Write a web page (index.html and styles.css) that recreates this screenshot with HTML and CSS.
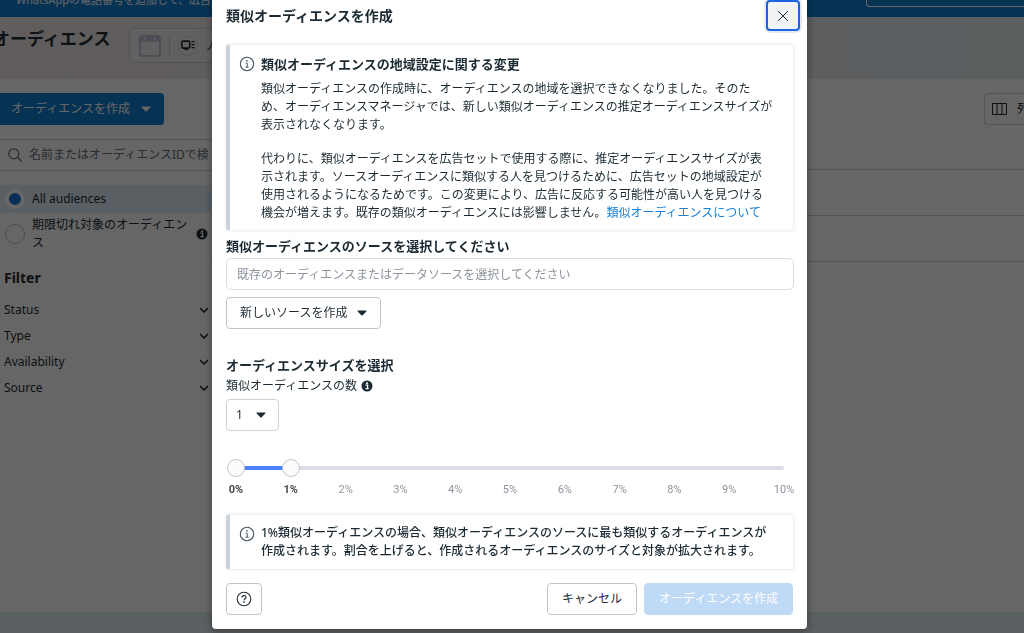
FILE: index.html
```html
<!DOCTYPE html>
<html lang="ja">
<head>
    <meta charset="UTF-8">
    <meta name="viewport" content="width=device-width, initial-scale=1.0">
    <title>類似オーディエンスを作成</title>
    <link rel="stylesheet" href="styles.css">
</head>
<body>
    <!-- Shared icons -->
    <svg class="icon-defs" width="0" height="0" aria-hidden="true">
        <symbol id="caret" viewBox="0 0 10 6"><path d="M1.2 0.5h7.6c.6 0 .9.6.5 1L5.7 5.3c-.4.4-1 .4-1.4 0L.7 1.5c-.4-.4-.1-1 .5-1z" fill="currentColor"/></symbol>
        <symbol id="chevron" viewBox="0 0 10 6"><path d="M1 1l4 4 4-4" fill="none" stroke="currentColor" stroke-width="1.6"/></symbol>
        <symbol id="info-solid" viewBox="0 0 12 12"><circle cx="6" cy="6" r="5.5" fill="currentColor"/><circle cx="6" cy="3.3" r="1" fill="var(--hole)"/><path d="M4.6 5.2h2v3.3h.9M4.5 8.6h3.2" fill="none" stroke="var(--hole)" stroke-width="1.2"/></symbol>
        <symbol id="info-line" viewBox="0 0 16 16"><circle cx="8" cy="8" r="6.7" fill="none" stroke="currentColor" stroke-width="1.1"/><circle cx="8" cy="4.9" r=".8" fill="currentColor"/><path d="M6.8 7.2h1.4v3.9M6.6 11.2h3" fill="none" stroke="currentColor"/></symbol>
    </svg>

    <div class="page">
        <div class="banner">
            <span class="banner-text">WhatsAppの電話番号を追加して、広告や</span>
            <button class="banner-btn" aria-label="追加"></button>
        </div>

        <header class="page-header">
            <h1>オーディエンス</h1>
            <button class="account-switch">
                <svg width="22" height="22" viewBox="0 0 22 22" fill="none" stroke="#bcc3d4" stroke-width="2"><rect x="1" y="1" width="20" height="20" rx="3"/><path d="M1 4h20" stroke-width="5"/><path d="M5 3.5h1.5M15 3.5h1.5" stroke="#fff"/></svg>
                <span class="divider"></span>
                <span class="account-icon">
                    <svg width="14" height="11" viewBox="0 0 16 12" fill="none" stroke="currentColor"><rect x="1" y="1" width="9" height="8" rx="1.5" stroke-width="1.8"/><path d="M4 10.5h4M12 1.5h3.5M12 5h3.5M12 8.5h3.5" stroke-width="1.4"/></svg>
                </span>
                <span>人</span>
            </button>
        </header>

        <div class="workspace">
            <aside class="sidebar">
                <button class="create-btn">オーディエンスを作成 <svg width="10" height="6"><use href="#caret"/></svg></button>
                <label class="search">
                    <svg width="14" height="14" viewBox="0 0 14 14" fill="none" stroke="currentColor" stroke-width="1.2"><circle cx="5.8" cy="5.8" r="5"/><path d="M9.5 9.5l4 4"/></svg>
                    <input type="text" placeholder="名前またはオーディエンスIDで検索" aria-label="検索">
                </label>
                <div class="audience-options">
                    <label class="option active"><input type="radio" name="audience" checked><span>All audiences</span></label>
                    <label class="option"><input type="radio" name="audience"><span>期限切れ対象のオーディエンス</span><svg width="12" height="12"><use href="#info-solid"/></svg></label>
                </div>
                <h2>Filter</h2>
                <button class="filter-row">Status <svg width="10" height="6"><use href="#chevron"/></svg></button>
                <button class="filter-row">Type <svg width="10" height="6"><use href="#chevron"/></svg></button>
                <button class="filter-row">Availability <svg width="10" height="6"><use href="#chevron"/></svg></button>
                <button class="filter-row">Source <svg width="10" height="6"><use href="#chevron"/></svg></button>
            </aside>
            <main class="content">
                <div class="toolbar">
                    <button class="columns-btn"><svg width="15" height="12" viewBox="0 0 15 12" fill="none" stroke="currentColor"><path d="M.5.5h14v11H.5zM5 .5v11M10 .5v11"/></svg>列</button>
                </div>
                <div class="row"></div>
                <div class="row"></div>
                <div class="row"></div>
            </main>
        </div>
        <footer class="page-footer"></footer>
    </div>

    <div class="overlay">
        <section class="modal" role="dialog" aria-labelledby="modal-title">
            <div class="modal-header">
                <h2 id="modal-title">類似オーディエンスを作成</h2>
                <button class="close-btn" aria-label="閉じる">
                    <svg width="12" height="12" viewBox="0 0 12 12" stroke="currentColor"><path d="M1 1l10 10M11 1L1 11"/></svg>
                </button>
            </div>

            <div class="modal-body">
                <div class="notice">
                    <svg class="notice-icon" width="16" height="16"><use href="#info-line"/></svg>
                    <div>
                        <h3>類似オーディエンスの地域設定に関する変更</h3>
                        <p>類似オーディエンスの作成時に、オーディエンスの地域を選択できなくなりました。そのた<br>め、オーディエンスマネージャでは、新しい類似オーディエンスの推定オーディエンスサイズが<br>表示されなくなります。</p>
                        <p>代わりに、類似オーディエンスを広告セットで使用する際に、推定オーディエンスサイズが表<br>示されます。ソースオーディエンスに類似する人を見つけるために、広告セットの地域設定が<br>使用されるようになるためです。この変更により、広告に反応する可能性が高い人を見つける<br>機会が増えます。既存の類似オーディエンスには影響しません。<a href="#">類似オーディエンスについて</a></p>
                    </div>
                </div>

                <label class="section-title" for="source">類似オーディエンスのソースを選択してください</label>
                <input class="source-input" id="source" type="text" placeholder="既存のオーディエンスまたはデータソースを選択してください">
                <button class="btn source-btn">新しいソースを作成 <svg width="10" height="6"><use href="#caret"/></svg></button>

                <h3 class="section-title size-title">オーディエンスサイズを選択</h3>
                <label class="count-label" for="count">類似オーディエンスの数 <svg width="12" height="12"><use href="#info-solid"/></svg></label>
                <div class="select-wrap">
                    <select id="count">
                        <option>1</option>
                        <option>2</option>
                        <option>3</option>
                    </select>
                    <svg width="10" height="6"><use href="#caret"/></svg>
                </div>

                <div class="slider">
                    <div class="track"><div class="fill" style="width: 10%"></div></div>
                    <input type="range" min="0" max="10" value="0" aria-label="最小">
                    <input type="range" min="0" max="10" value="1" aria-label="最大">
                </div>
                <div class="ticks">
                    <span class="on">0%</span><span class="on">1%</span><span>2%</span><span>3%</span><span>4%</span><span>5%</span><span>6%</span><span>7%</span><span>8%</span><span>9%</span><span>10%</span>
                </div>

                <div class="notice notice-size">
                    <svg class="notice-icon" width="16" height="16"><use href="#info-line"/></svg>
                    <p>1%類似オーディエンスの場合、類似オーディエンスのソースに最も類似するオーディエンスが<br>作成されます。割合を上げると、作成されるオーディエンスのサイズと対象が拡大されます。</p>
                </div>
            </div>

            <div class="modal-footer">
                <button class="btn help-btn" aria-label="ヘルプ">
                    <svg width="16" height="16" viewBox="0 0 16 16" fill="none" stroke="currentColor" stroke-width="1.1"><circle cx="8" cy="8" r="6.8"/><path d="M6 6.6c0-1.2.8-2 2-2s2 .8 2 1.8c0 1.3-2 1.5-2 2.9"/><circle cx="8" cy="11.2" r=".3"/></svg>
                </button>
                <button class="btn cancel-btn">キャンセル</button>
                <button class="btn submit-btn" disabled>オーディエンスを作成</button>
            </div>
        </section>
    </div>
</body>
</html>
```
FILE: styles.css
```css
:root {
    --text: #1c2b33;
    --muted: #8d949e;
    --blue: #1080d2;
    --border: #cbd2d9;
    --hole: #fff;
}

* {
    margin: 0;
    padding: 0;
    box-sizing: border-box;
}

body {
    font-family: "Noto Sans", "Noto Sans CJK JP", sans-serif;
    font-size: 12px;
    line-height: 18px;
    color: var(--text);
    overflow: hidden;
}

button, input, select {
    font: inherit;
    color: inherit;
}

button {
    border: none;
    background: none;
    cursor: pointer;
    white-space: nowrap;
}

svg {
    flex-shrink: 0;
}

.icon-defs {
    position: absolute;
}

/* Page behind the dialog */
.page {
    min-height: 100vh;
    display: flex;
    flex-direction: column;
    background: #fff;
}

.banner {
    display: flex;
    justify-content: space-between;
    align-items: flex-start;
    height: 17px;
    overflow: hidden;
    padding-left: 16px;
    background: var(--blue);
    color: #fff;
    font-size: 11px;
}

.banner-text {
    margin-top: -9px;
}

.banner-btn {
    width: 158px;
    height: 7px;
    border: 1px solid #fff;
    border-top: none;
    border-right: none;
    border-radius: 0 0 0 4px;
}

.page-header {
    display: flex;
    align-items: flex-start;
    gap: 19px;
    height: 62px;
    padding-top: 11px;
    background: linear-gradient(90deg, #f2e8e7, #e6e6ee 60%, #e4eef1);
}

.page-header h1 {
    margin-left: -7px;
    font-size: 17px;
    line-height: 22px;
}

.account-switch {
    display: flex;
    align-items: center;
    gap: 8px;
    width: 170px;
    height: 35px;
    padding-left: 9px;
    border: 1px solid var(--border);
    border-radius: 4px;
    background: rgba(255, 255, 255, 0.3);
}

.divider {
    width: 1px;
    height: 20px;
    background: var(--border);
}

.account-icon {
    display: flex;
    align-items: center;
    justify-content: center;
    width: 20px;
    height: 20px;
    border: 1px solid #dadde3;
    border-radius: 50%;
}

.workspace {
    display: flex;
    flex: 1;
    padding-top: 14px;
}

.sidebar {
    width: 211px;
}

.create-btn {
    display: flex;
    align-items: center;
    gap: 11px;
    height: 32px;
    padding: 0 13px 0 11px;
    border-radius: 0 4px 4px 0;
    background: var(--blue);
    color: #fff;
}

.search {
    display: flex;
    align-items: center;
    gap: 7px;
    height: 32px;
    margin-top: 14px;
    padding: 0 3px 0 8px;
    border-top: 1px solid var(--border);
    border-bottom: 1px solid var(--border);
    color: #65707a;
}

.search input {
    flex: 1;
    min-width: 0;
    border: none;
    background: none;
}

.search input::placeholder {
    color: #65707a;
}

.audience-options {
    margin-top: 14px;
}

.option {
    display: flex;
    align-items: center;
    gap: 7px;
    min-height: 28px;
    padding: 0 3px 0 5px;
}

.option + .option {
    padding-top: 3px;
}

.option span {
    flex: 1;
}

.option.active {
    background: #dfedf8;
}

.option input {
    appearance: none;
    flex-shrink: 0;
    width: 20px;
    height: 20px;
    border: 1px solid #b8bec4;
    border-radius: 50%;
}

.option input:checked {
    border: 4px solid #fff;
    background: #1877d2;
}

.sidebar h2 {
    margin: 16px 0 9px 4px;
    font-size: 14px;
    line-height: 20px;
}

.filter-row {
    display: flex;
    justify-content: space-between;
    align-items: center;
    width: 100%;
    height: 26px;
    padding: 0 2px 0 4px;
}

.content {
    flex: 1;
}

.toolbar {
    display: flex;
    justify-content: flex-end;
    height: 77px;
    border-bottom: 1px solid var(--border);
}

.columns-btn {
    display: flex;
    align-items: center;
    gap: 10px;
    width: 40px;
    height: 32px;
    padding-left: 7px;
    border: 1px solid var(--border);
    border-right: none;
    border-radius: 4px 0 0 4px;
    overflow: hidden;
}

.row {
    height: 46px;
    border-bottom: 1px solid var(--border);
}

.row:last-child {
    border: none;
}

.page-footer {
    height: 21px;
    background: #e2eef3;
}

/* Dialog */
.overlay {
    position: fixed;
    inset: 0;
    display: flex;
    justify-content: center;
    align-items: flex-start;
    padding-right: 5px;
    background: rgba(0, 0, 0, 0.6);
}

.modal {
    width: 595px;
    max-width: 100%;
    background: #fff;
    border-radius: 0 0 4px 4px;
    box-shadow: 0 2px 8px rgba(0, 0, 0, 0.4);
}

.modal-header {
    display: flex;
    justify-content: space-between;
    align-items: center;
    padding: 0 7px 0 14px;
}

.modal-header h2 {
    font-size: 14px;
    line-height: 20px;
}

.close-btn {
    display: flex;
    align-items: center;
    justify-content: center;
    width: 34px;
    height: 31px;
    border: 2px solid #1b63e0;
    border-radius: 4px;
    background: #f2f3f4;
    box-shadow: 0 0 0 2px #e6eaee;
}

.modal-body {
    padding: 13px 13px 0 14px;
}

.notice {
    display: flex;
    gap: 6px;
    padding: 9px 8px 8px 9px;
    border: 1px solid #eff1f3;
    border-left: 4px solid var(--border);
    border-radius: 4px;
    box-shadow: 0 0 3px rgba(0, 0, 0, 0.1);
}

.notice-icon {
    margin-top: 2px;
    color: #46545e;
}

.notice h3 {
    font-size: 13px;
    line-height: 20px;
    margin-bottom: 6px;
}

.notice p {
    white-space: nowrap;
}

.notice p + p {
    margin-top: 16px;
}

.notice a {
    color: #1580d8;
    text-decoration: none;
}

.section-title {
    display: block;
    margin-top: 5px;
    font-size: 13px;
    font-weight: bold;
    line-height: 20px;
}

.source-input {
    display: block;
    width: 100%;
    height: 32px;
    margin-top: 2px;
    padding: 0 10px;
    border: 1px solid #d8dce0;
    border-radius: 5px;
}

.source-input::placeholder {
    color: var(--muted);
}

.btn {
    display: flex;
    align-items: center;
    justify-content: center;
    gap: 10px;
    height: 32px;
    padding: 0 14px;
    border: 1px solid #bcc7d0;
    border-radius: 4px;
    background: #fff;
}

.source-btn {
    margin-top: 7px;
    padding: 0 13px;
}

.size-title {
    margin-top: 26px;
}

.count-label {
    display: flex;
    align-items: center;
    gap: 4px;
    margin-top: 2px;
}

.select-wrap {
    position: relative;
    width: 53px;
    margin-top: 4px;
}

.select-wrap select {
    appearance: none;
    display: block;
    width: 100%;
    height: 32px;
    padding: 0 9px;
    border: 1px solid var(--border);
    border-radius: 4px;
    background: #fff;
}

.select-wrap svg {
    position: absolute;
    top: 13px;
    right: 13px;
    pointer-events: none;
}

.slider {
    display: grid;
    align-items: center;
    margin: 28px 1px 0;
}

.slider > * {
    grid-area: 1 / 1;
}

.track {
    height: 4px;
    margin: 0 9px;
    border-radius: 2px;
    background: #dadde3;
}

.fill {
    height: 100%;
    background: #4a82f7;
}

.slider input {
    appearance: none;
    width: 100%;
    height: 18px;
    background: none;
    pointer-events: none;
}

.slider input::-webkit-slider-thumb {
    appearance: none;
    width: 18px;
    height: 18px;
    border: 1px solid #c3c5c9;
    border-radius: 50%;
    background: #fbfbfb;
    pointer-events: auto;
}

.ticks {
    display: flex;
    justify-content: space-between;
    margin: 4px 1px 0;
    font-family: Roboto, sans-serif;
    font-size: 11px;
    color: var(--muted);
}

.ticks span {
    display: flex;
    justify-content: center;
    width: 18px;
}

.ticks .on {
    font-weight: bold;
    color: #444950;
}

.notice-size {
    margin-top: 15px;
    padding-bottom: 9px;
    font-weight: 500;
}

.modal-footer {
    display: flex;
    align-items: center;
    gap: 7px;
    padding: 13px 14px 14px;
}

.help-btn {
    padding: 0 9px;
    margin-right: auto;
}

.submit-btn {
    border-color: #bfdaf6;
    background: #bfdaf6;
    color: #fff;
}
```
